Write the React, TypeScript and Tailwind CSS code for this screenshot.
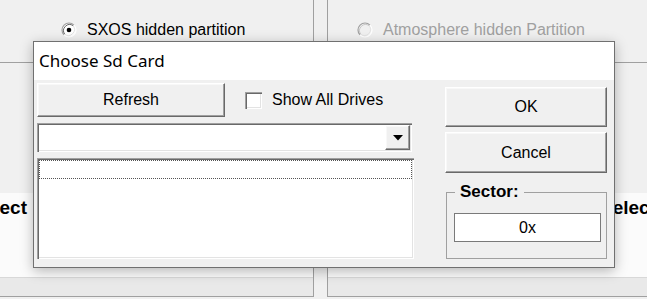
import React from 'react';

const raised =
  'bg-[#f0f0f0] border border-t-white border-l-white border-r-[#696969] border-b-[#696969] shadow-[inset_-1px_-1px_0_#a0a0a0,inset_1px_1px_0_#f8f8f8]';
const sunken =
  'bg-white shadow-[inset_1px_1px_0_#a0a0a0,inset_2px_2px_0_#696969,inset_-1px_-1px_0_#ffffff,inset_-2px_-2px_0_#e3e3e3]';

function Radio({ checked, disabled }: { checked?: boolean; disabled?: boolean }) {
  return (
    <svg width="16" height="16" viewBox="0 0 16 16" className="shrink-0">
      <circle cx="8" cy="8" r="6.5" fill={disabled ? '#f0f0f0' : '#ffffff'} />
      <path d="M3.05 12.95 A7 7 0 0 1 12.95 3.05" fill="none" stroke="#a0a0a0" strokeWidth="1.2" />
      <path d="M3.8 12.2 A6 6 0 0 1 12.2 3.8" fill="none" stroke={disabled ? '#c8c8c8' : '#696969'} strokeWidth="1" />
      <path d="M3.05 12.95 A7 7 0 0 0 12.95 3.05" fill="none" stroke="#ffffff" strokeWidth="1.2" />
      <path d="M3.8 12.2 A6 6 0 0 0 12.2 3.8" fill="none" stroke="#e3e3e3" strokeWidth="1" />
      {checked && <circle cx="8" cy="8" r="2.3" fill="#000" />}
    </svg>
  );
}

function Panel({ children, label, textLeft, className }: { children: React.ReactNode; label: string; textLeft: string; className: string }) {
  return (
    <div className={`flex h-[297px] flex-col overflow-hidden border-b border-[#a0a0a0] ${className}`}>
      <div className="flex h-[63px] items-center border-b border-[#a0a0a0] pb-[2px]">{children}</div>
      <div className="h-[130px] bg-[#f0f0f0]" />
      <div className="h-[84px] overflow-hidden bg-[#fbfbfb] pt-[5px]">
        <div className={`whitespace-nowrap text-[19px] font-bold leading-[19px] ${textLeft}`}>{label}</div>
      </div>
      <div className="flex-1 border-t border-[#d8d8d8] bg-[#e9e9e9]" />
    </div>
  );
}

export default function App() {
  return (
    <div className="relative h-[299px] w-[647px] overflow-hidden bg-[#f0f0f0] font-['Liberation_Sans',Arial,sans-serif] text-[16px] text-black">
      {/* Background window */}
      <div className="flex gap-[13px]">
        <Panel label="Select" textLeft="-ml-[29px]" className="w-[314px] shrink-0 border-r">
          <div className="flex items-center gap-[10px] whitespace-nowrap pl-[61px]">
            <Radio checked />
            <span>SXOS hidden partition</span>
          </div>
        </Panel>
        <Panel label="Select Atmosphere" textLeft="ml-[272px]" className="min-w-0 flex-1 border-l">
          <div className="flex items-center gap-[10px] whitespace-nowrap pl-[29px]">
            <Radio disabled />
            <span className="text-[#a0a0a0]">Atmosphere hidden Partition</span>
          </div>
        </Panel>
      </div>

      {/* Dialog */}
      <div className="absolute left-[33px] top-[41px] flex h-[227px] w-[582px] flex-col border border-[#707070] bg-[#f0f0f0] shadow-[0_3px_12px_rgba(0,0,0,0.28)]">
        <div className="flex h-[38px] items-center bg-white pl-[5px] font-['Noto_Sans',sans-serif] text-[17px]">
          Choose Sd Card
        </div>
        <div className="flex flex-1 gap-[31px] pl-[3px]">
          <div className="flex w-[377px] flex-col pt-[3px]">
            <div className="flex h-[34px] items-center">
              <button className={`${raised} h-[34px] w-[188px]`}>Refresh</button>
              <span className={`${sunken} ml-[20px] h-[17px] w-[17px]`} />
              <span className="ml-[10px]">Show All Drives</span>
            </div>
            <div className={`${sunken} mt-[6px] flex h-[29px] w-[375px] justify-end p-[2px]`}>
              <div className={`${raised} flex h-[25px] w-[25px] items-center justify-center`}>
                <svg width="10" height="6" viewBox="0 0 10 6">
                  <path d="M0 0 H10 L5 5.5 Z" fill="#000" />
                </svg>
              </div>
            </div>
            <div className={`${sunken} mt-[6px] h-[101px] w-[377px] p-[2px]`}>
              <div className="h-[19px] w-full border border-dotted border-[#555]" />
            </div>
          </div>
          <div className="flex w-[162px] flex-col pt-[7px]">
            <button className={`${raised} h-[40px] w-full`}>OK</button>
            <button className={`${raised} mt-[5px] h-[41px] w-full`}>Cancel</button>
            <fieldset className="ml-[1px] mt-[9px] h-[77px] w-[161px] border border-[#a0a0a0] pl-[8px]">
              <legend className="px-[5px] text-[17px] font-bold leading-[20px]">Sector:</legend>
              <div className="-ml-px mt-[11px] flex h-[29px] w-[147px] items-center justify-center border border-[#7a7a7a] bg-white">
                0x
              </div>
            </fieldset>
          </div>
        </div>
      </div>
    </div>
  );
}
